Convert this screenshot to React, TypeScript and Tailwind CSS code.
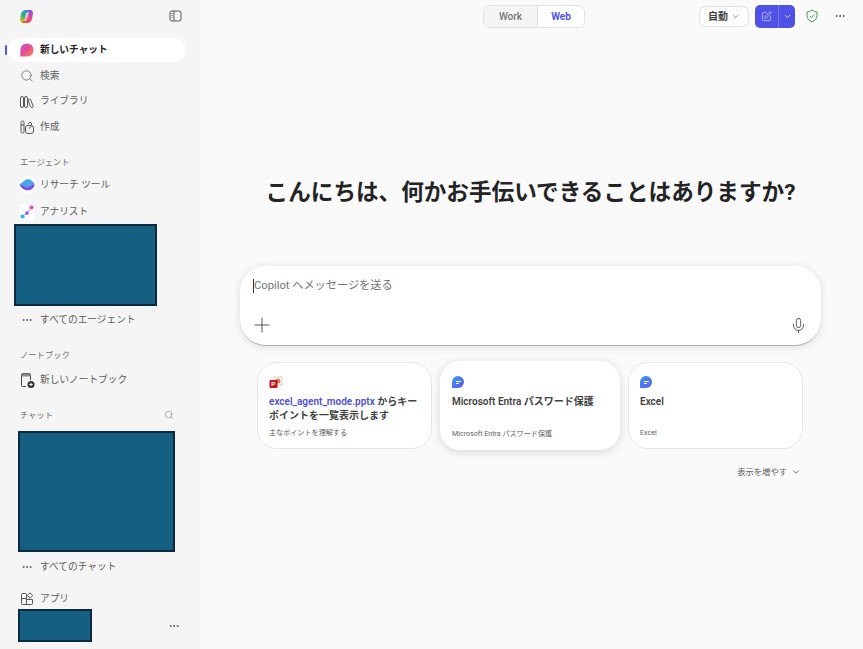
import { ChevronDown, Ellipsis, Mic, Plus, Search, SquarePen } from 'lucide-react';

function CopilotLogo() {
  return (
    <svg width="15" height="15" viewBox="0 0 14 14">
      <defs>
        <linearGradient id="logoLeft" x1="0.7" y1="0" x2="0.3" y2="1">
          <stop offset="0" stopColor="#2b8ff0" />
          <stop offset="0.55" stopColor="#35b36b" />
          <stop offset="1" stopColor="#f4c430" />
        </linearGradient>
        <linearGradient id="logoRight" x1="0.7" y1="0" x2="0.3" y2="1">
          <stop offset="0" stopColor="#f0562f" />
          <stop offset="0.5" stopColor="#e5489a" />
          <stop offset="1" stopColor="#7a4fe0" />
        </linearGradient>
      </defs>
      <path d="M6 1h3.500C10.500 1 11 1.500 11 2.300L9 2.800C7.300 3.200 6.400 5 6 6.500L5.200 10C5 11.800 6 13 7 13H4C2 13 .7 11.500 1 9.500L1.800 5C2.300 2.500 4 1 6 1z" fill="url(#logoLeft)" />
      <path d="M6 1h3.500C10.500 1 11 1.500 11 2.300L9 2.800C7.300 3.200 6.400 5 6 6.500L5.200 10C5 11.800 6 13 7 13H4C2 13 .7 11.500 1 9.500L1.800 5C2.300 2.500 4 1 6 1z" fill="url(#logoRight)" transform="rotate(180 7 7)" />
      <path d="M6.600 5.500 8.900 4.700 7.600 9.300 5.300 9.800z" fill="#f3a5c4" />
    </svg>
  );
}

function SidebarToggleIcon() {
  return (
    <svg width="13" height="12" viewBox="0 0 13 12" fill="none" stroke="#555" strokeWidth="1">
      <rect x="1" y="1" width="11" height="10" rx="2" />
      <path d="M5 1v10M2.500 3.500h1M2.500 5.500h1M2.500 7.500h1" />
    </svg>
  );
}

function NewChatIcon() {
  return (
    <span className="w-3 h-3 rounded-full rounded-bl-[2px] bg-gradient-to-br from-[#b44fd6] via-[#ea4f8e] to-[#f28a3c] scale-110" />
  );
}

function LibraryIcon() {
  return (
    <svg width="16" height="16" viewBox="0 0 16 16" fill="none" stroke="#555" strokeWidth="1">
      <rect x="1.500" y="2.500" width="3" height="11" rx="1.500" />
      <rect x="5.500" y="2.500" width="3" height="11" rx="1.500" />
      <path d="M9.800 5.300c.7-.5 1.600-.3 1.900.5l2.400 6.200c.3.800-.1 1.500-.8 1.700-.7.200-1.400-.1-1.700-.8L9.300 7c-.3-.7 0-1.300.5-1.700z" />
    </svg>
  );
}

function CreateIcon() {
  return (
    <svg width="16" height="16" viewBox="0 0 16 16" fill="none" stroke="#555" strokeWidth="1">
      <path d="M2 6V3.500a1.500 1.500 0 0 1 3 0V6M2 6v6.500a1.500 1.500 0 0 0 3 0V6M2 6h3" />
      <rect x="6.500" y="6.500" width="8" height="8" rx="2.500" />
      <path d="M9 5l2-2 2 2-2 2M10 9.500l2.500-2" />
    </svg>
  );
}

function ResearchIcon() {
  return (
    <svg width="18" height="18" viewBox="0 0 18 18" className="shrink-0">
      <circle cx="9" cy="9" r="8.800" fill="#fff" />
      <path d="M1.500 8.500 8 3.600c2.800-1.300 6.500.3 8.500 4.200L9 11.500z" fill="#45a4ea" />
      <path d="M1.500 8.500c2.700.7 5.300 1.700 7.500 3l7.500-3.700c.2 3.300-2.300 6-5.500 6.500-3.700.5-8-1.800-9.500-5.800z" fill="#7a4fe0" />
    </svg>
  );
}

function AnalystIcon() {
  return (
    <svg width="16" height="16" viewBox="0 0 16 16">
      <rect width="16" height="16" rx="4" fill="#fff" />
      <path d="M3.500 12.500 8 9l4.500-5.500" stroke="#b06ae0" strokeWidth="1.200" strokeDasharray="1.500 1.200" fill="none" />
      <circle cx="3.500" cy="12.500" r="2.100" fill="#2fb8e8" />
      <circle cx="8" cy="9" r="1.800" fill="#8a55e0" />
      <circle cx="12.500" cy="3.500" r="2.100" fill="#e04fc0" />
    </svg>
  );
}

function NotebookIcon() {
  return (
    <svg width="16" height="16" viewBox="0 0 16 16" fill="none">
      <path d="M7 14.500H3.500a1 1 0 0 1-1-1v-11a1 1 0 0 1 1-1h7a1 1 0 0 1 1 1V8" stroke="#444" strokeWidth="1" />
      <path d="M2.500 4.500h9V2.500a1 1 0 0 0-1-1h-7a1 1 0 0 0-1 1z" fill="#888" />
      <circle cx="12" cy="12.500" r="3.500" fill="#333" />
      <path d="M12 10.800v3.400M10.300 12.500h3.400" stroke="#fff" strokeWidth="1" />
    </svg>
  );
}

function AppsIcon() {
  return (
    <svg width="16" height="16" viewBox="0 0 16 16" fill="none" stroke="#555" strokeWidth="1">
      <path d="M2.500 3.500a1 1 0 0 1 1-1h3a1 1 0 0 1 1 1v4h-5z" />
      <path d="M2.500 7.500h5v6h-4a1 1 0 0 1-1-1z" />
      <path d="M7.500 8.500h6v4a1 1 0 0 1-1 1h-5z" />
      <path d="M11 1.800 13.700 4.500 11 7.200 8.300 4.500z" />
    </svg>
  );
}

function ShieldIcon() {
  return (
    <svg width="14" height="14" viewBox="0 0 14 14" fill="none" stroke="#3f9a4c" strokeWidth="1">
      <path d="M7 1c1.500 1.200 3.200 1.800 5 2v3.500c0 3-2 5.200-5 6.500-3-1.300-5-3.500-5-6.500V3c1.800-.2 3.500-.8 5-2z" />
      <path d="M4.800 7l1.600 1.600 2.900-3" />
    </svg>
  );
}

function PptIcon() {
  return (
    <svg width="14" height="13" viewBox="0 0 14 13">
      <path d="M5 1h5l3 0v8H5z" fill="#fff" stroke="#bbb" strokeWidth=".7" />
      <circle cx="9" cy="5" r="2.500" fill="#e8785a" />
      <rect x=".500" y="4" width="8" height="8" rx="1" fill="#c4161c" />
      <text x="2.300" y="10.300" fontSize="6" fontWeight="700" fill="#fff" fontFamily="'Liberation Sans', sans-serif">P</text>
    </svg>
  );
}

function ChatBubbleIcon() {
  return (
    <span className="flex w-3 h-3 items-center justify-center rounded-full rounded-bl-[2px] bg-gradient-to-br from-[#2f9bf5] to-[#5a55e8]">
      <span className="flex flex-col gap-[1px]">
        <span className="block w-[5px] h-[1px] bg-white" />
        <span className="block w-[3px] h-[1px] bg-white" />
      </span>
    </span>
  );
}

function NavItem({ icon, label, active }: { icon: React.ReactNode; label: string; active?: boolean }) {
  return (
    <div className={`relative flex items-center gap-[5px] h-6 ml-2 mr-[14px] pl-[11px] rounded-xl ${active ? 'bg-white font-bold text-[#242424]' : 'text-[#5c5c5c]'}`}>
      {active && <span className="absolute left-[-3px] top-[7px] w-[2px] h-[10px] rounded bg-[#4f52e8]" />}
      <span className="flex w-4 h-4 items-center justify-center">{icon}</span>
      <span className="text-[9.700px]">{label}</span>
    </div>
  );
}

function SectionLabel({ children }: { children: React.ReactNode }) {
  return <div className="pl-5 text-[8.300px] text-[#6e6e6e]">{children}</div>;
}

function Redacted({ className }: { className: string }) {
  return <div className={`bg-[#156082] border-2 border-[#0b2a3f] ${className}`} />;
}

function SuggestionCard({ icon, title, sub, raised }: { icon: React.ReactNode; title: React.ReactNode; sub: string; raised?: boolean }) {
  return (
    <div className={`flex flex-col bg-white rounded-[20px] ${raised ? 'h-[89px] pl-3 pr-2 pt-[15px] pb-[10px] shadow-[0_2px_10px_rgba(0,0,0,0.14)]' : 'h-[87px] pl-[11px] pr-2 pt-[13px] pb-[9px] border border-[#e6e6e6]'}`}>
      <span className="flex h-3 items-center">{icon}</span>
      <div className="mt-[7px] text-[10px] leading-[14px] font-semibold text-[#424242]">{title}</div>
      <div className="mt-auto text-[7.100px] text-[#616161]">{sub}</div>
    </div>
  );
}

export default function App() {
  return (
    <div className="flex w-[863px] h-[649px] overflow-hidden bg-[#fafafa] font-['Roboto','Noto_Sans_CJK_JP',sans-serif]">
      <aside className="flex flex-col w-[200px] shrink-0 bg-[#f5f5f5]">
        <div className="flex items-center justify-between h-[38px] pl-[19px] pr-[18px] pb-[6px]">
          <CopilotLogo />
          <SidebarToggleIcon />
        </div>
        <NavItem active icon={<NewChatIcon />} label="新しいチャット" />
        <div className="flex flex-col gap-[1.500px] mt-[2px]">
          <NavItem icon={<Search size={14} strokeWidth={1.200} color="#555" />} label="検索" />
          <NavItem icon={<LibraryIcon />} label="ライブラリ" />
          <NavItem icon={<CreateIcon />} label="作成" />
        </div>
        <div className="mt-[17px]"><SectionLabel>エージェント</SectionLabel></div>
        <div className="mt-[5px] flex flex-col gap-[3px]">
          <NavItem icon={<ResearchIcon />} label="リサーチ ツール" />
          <NavItem icon={<AnalystIcon />} label="アナリスト" />
        </div>
        <Redacted className="w-[143px] h-[82px] ml-[14px]" />
        <div className="mt-[2px]">
          <NavItem icon={<Ellipsis size={12} color="#555" />} label="すべてのエージェント" />
        </div>
        <div className="mt-[17px]"><SectionLabel>ノートブック</SectionLabel></div>
        <div className="mt-[6px]">
          <NavItem icon={<NotebookIcon />} label="新しいノートブック" />
        </div>
        <div className="flex items-center justify-between mt-[17px] pr-[26px]">
          <SectionLabel>チャット</SectionLabel>
          <Search size={10} strokeWidth={1.200} color="#666" />
        </div>
        <Redacted className="w-[157px] h-[121px] ml-[18px] mt-[10px]" />
        <div className="mt-[3px]">
          <NavItem icon={<Ellipsis size={12} color="#555" />} label="すべてのチャット" />
        </div>
        <div className="mt-[8px]">
          <NavItem icon={<AppsIcon />} label="アプリ" />
        </div>
        <div className="flex items-center justify-between pr-[20px] -mt-[2px]">
          <Redacted className="w-[74px] h-[33px] ml-[18px]" />
          <Ellipsis size={12} color="#555" />
        </div>
      </aside>

      <main className="flex flex-col flex-1 min-w-0">
        <header className="flex items-center h-[32px] pr-[17px]">
          <div className="flex ml-[283px] h-[23px] rounded-[7px] border border-[#e0e0e0] overflow-hidden text-[10px]">
            <span className="flex items-center justify-center w-[53px] bg-[#f5f5f5] text-[#757575] font-medium">Work</span>
            <span className="flex items-center justify-center w-[47px] bg-white text-[#4f52e8] font-bold border-l border-[#e0e0e0]">Web</span>
          </div>
          <div className="flex items-center justify-center gap-[3px] ml-auto w-[50px] h-[21px] rounded-[7px] border border-[#e0e0e0] bg-white text-[10px] font-semibold text-[#424242]">
            自動
            <ChevronDown size={9} color="#777" />
          </div>
          <div className="flex ml-[6px] h-[23px] rounded-[5px] overflow-hidden bg-[#4f52e8]">
            <span className="flex items-center justify-center w-[23px]">
              <SquarePen size={11} color="#fff" strokeWidth={1.200} />
            </span>
            <span className="flex items-center justify-center w-[17px] border-l border-[#7a7cf0]">
              <ChevronDown size={9} color="#fff" />
            </span>
          </div>
          <span className="ml-[10px]"><ShieldIcon /></span>
          <span className="ml-[15px]"><Ellipsis size={12} color="#555" /></span>
        </header>

        <h1 className="mt-[145px] pr-[2px] text-center text-[22.600px] leading-[32px] font-bold text-[#242424]">
          こんにちは、何かお手伝いできることはありますか?
        </h1>

        <div className="flex flex-col mt-[57px] ml-[40px] w-[581px] h-[80px] rounded-[26px] bg-white border-b border-[#b0b0b0] shadow-[0_1px_8px_rgba(0,0,0,0.12)] pl-[13px] pr-[14px]">
          <div className="flex items-center h-[40px] text-[11.200px] text-[#757575]">
            <span className="w-[1px] h-[14px] bg-[#333]" />
            Copilot へメッセージを送る
          </div>
          <div className="flex items-center justify-between mt-auto mb-[8px]">
            <Plus size={24} strokeWidth={0.900} color="#424242" className="-ml-[3px]" />
            <Mic size={17} strokeWidth={1.200} color="#424242" />
          </div>
        </div>

        <div className="grid grid-cols-[175px_180px_175px] gap-2 mt-[15px] ml-[57px] w-[547px] items-center">
          <SuggestionCard
            icon={<PptIcon />}
            title={<><span className="text-[#4f52c8]">excel_agent_mode.pptx</span> からキーポイントを一覧表示します</>}
            sub="主なポイントを理解する"
          />
          <SuggestionCard raised icon={<ChatBubbleIcon />} title="Microsoft Entra パスワード保護" sub="Microsoft Entra パスワード保護" />
          <SuggestionCard icon={<ChatBubbleIcon />} title="Excel" sub="Excel" />
        </div>

        <div className="flex items-center justify-end gap-[4px] mt-[16px] mr-[62px] text-[8.300px] text-[#616161]">
          表示を増やす
          <ChevronDown size={10} color="#616161" />
        </div>
      </main>
    </div>
  );
}
